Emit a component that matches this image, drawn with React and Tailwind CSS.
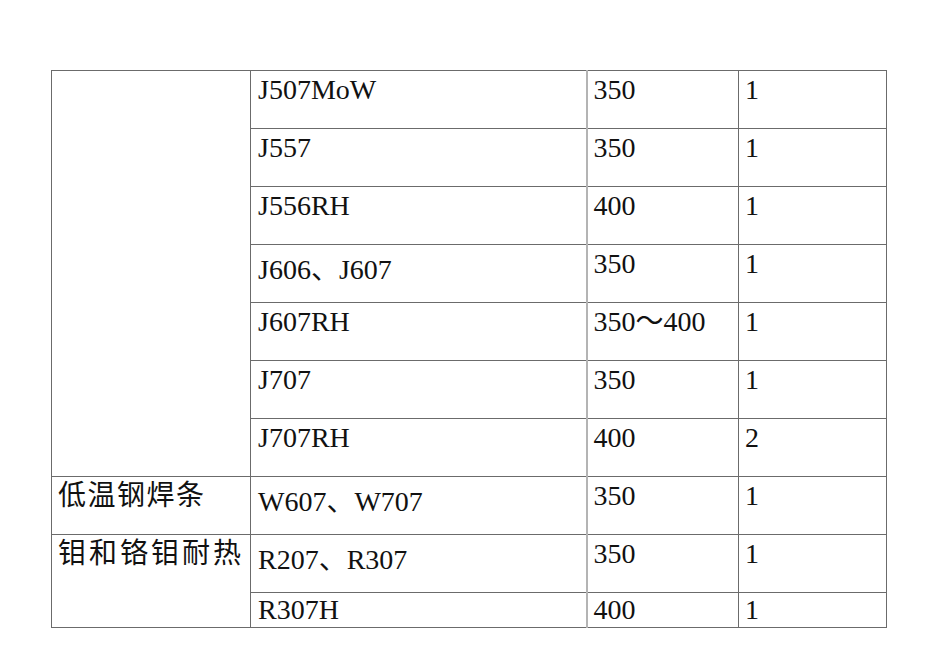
const rows = [
  { code: "J507MoW", temp: "350", n: "1" },
  { code: "J557", temp: "350", n: "1" },
  { code: "J556RH", temp: "400", n: "1" },
  { code: "J606、J607", temp: "350", n: "1", low: true },
  { code: "J607RH", temp: "350～400", n: "1" },
  { code: "J707", temp: "350", n: "1" },
  { code: "J707RH", temp: "400", n: "2" },
  { code: "W607、W707", temp: "350", n: "1", low: true, group: "低温钢焊条", span: 1, track: "tracking-[1.5px]" },
  { code: "R207、R307", temp: "350", n: "1", low: true, group: "钼和铬钼耐热", span: 2, track: "tracking-[3px]" },
  { code: "R307H", temp: "400", n: "1", last: true },
];

const cell = "border border-[#6b6b6b] align-top p-0";
const latin = "font-['Liberation_Serif','Noto_Sans_CJK_SC',serif] text-[28px] text-[#111]";

export default function App() {
  return (
    <div className="w-[950px] h-[672px] bg-white pt-[70px] pl-[51px]">
      <table className="table-fixed border-collapse w-[835px]">
        <colgroup>
          <col className="w-[199px]" />
          <col className="w-[336px]" />
          <col className="w-[152px]" />
          <col className="w-[148px]" />
        </colgroup>
        <tbody>
          {rows.map((r, i) => {
            const lh = r.last ? "leading-[28px] pt-[3px]" : "leading-[32px] pt-[3px]";
            return (
              <tr key={r.code} className={r.last ? "h-[35px]" : "h-[58px]"}>
                {i === 0 && <td rowSpan={7} className={cell}></td>}
                {r.group && (
                  <td rowSpan={r.span} className={cell}>
                    <div
                      className={`pl-[6px] pt-0 font-['Noto_Sans_CJK_SC',sans-serif] text-[28px] leading-[32px] text-[#111] whitespace-nowrap ${r.track}`}
                    >
                      {r.group}
                    </div>
                  </td>
                )}
                <td className={cell}>
                  <div
                    className={`${latin} pl-[7px] whitespace-nowrap ${
                      r.low ? "leading-[32px] pt-[9px]" : lh
                    }`}
                  >
                    {r.code}
                  </div>
                </td>
                <td className={`${cell} border-l-2 border-l-[#b4b4b4]`}>
                  <div className={`${latin} ${lh} pl-[6px] whitespace-nowrap`}>{r.temp}</div>
                </td>
                <td className={cell}>
                  <div className={`${latin} ${lh} pl-[6px]`}>{r.n}</div>
                </td>
              </tr>
            );
          })}
        </tbody>
      </table>
    </div>
  );
}
